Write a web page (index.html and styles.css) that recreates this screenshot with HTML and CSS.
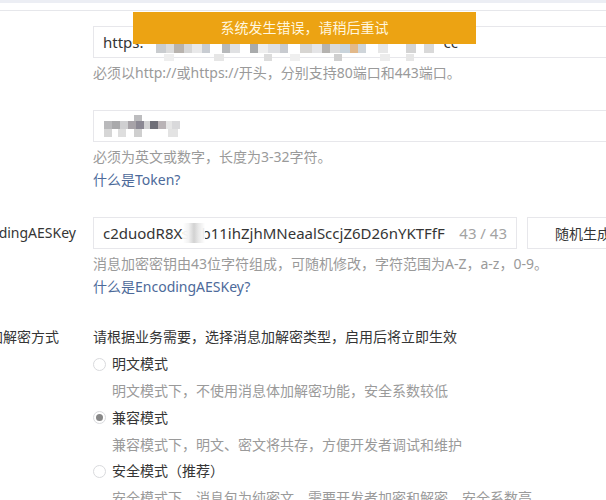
FILE: index.html
```html
<!DOCTYPE html>
<html lang="zh-CN">
<head>
<meta charset="utf-8">
<title>服务器配置</title>
<link rel="stylesheet" href="styles.css">
</head>
<body>
<div class="topbar"></div>
<div class="divider"></div>

<div class="toast">系统发生错误，请稍后重试</div>

<form class="form">
  <div class="row">
    <label class="label">URL</label>
    <div class="control">
      <div class="input wide"><span class="val">https:</span><span class="mosaic m1"></span><span class="val">cc</span></div>
      <p class="hint">必须以http://或https://开头，分别支持80端口和443端口。</p>
    </div>
  </div>

  <div class="row">
    <label class="label">Token</label>
    <div class="control">
      <div class="input wide"><span class="mosaic m2"></span></div>
      <p class="hint">必须为英文或数字，长度为3-32字符。</p>
      <a class="link" href="#">什么是Token?</a>
    </div>
  </div>

  <div class="row">
    <label class="label key-label">EncodingAESKey</label>
    <div class="control">
      <div class="key-line">
        <div class="input key">
          <span class="val">c2duodR8Xs<span class="blob"></span>b11ihZjhMNeaalSccjZ6D26nYKTFfF</span>
          <span class="count">43 / 43</span>
        </div>
        <button type="button" class="btn">随机生成</button>
      </div>
      <p class="hint">消息加密密钥由43位字符组成，可随机修改，字符范围为A-Z，a-z，0-9。</p>
      <a class="link" href="#">什么是EncodingAESKey?</a>
    </div>
  </div>

  <div class="row mode-row">
    <label class="label plain">消息加解密方式</label>
    <div class="control">
      <p class="intro">请根据业务需要，选择消息加解密类型，启用后将立即生效</p>
      <div class="option"><span class="radio"></span>明文模式</div>
      <p class="desc">明文模式下，不使用消息体加解密功能，安全系数较低</p>
      <div class="option"><span class="radio checked"></span>兼容模式</div>
      <p class="desc">兼容模式下，明文、密文将共存，方便开发者调试和维护</p>
      <div class="option"><span class="radio"></span>安全模式（推荐）</div>
      <p class="desc">安全模式下，消息包为纯密文，需要开发者加密和解密，安全系数高</p>
    </div>
  </div>
</form>
</body>
</html>
```

FILE: styles.css
```css
html, body {
  margin: 0;
  padding: 0;
  background: #ffffff;
  overflow: hidden;
}

body {
  font-family: "Noto Sans", "Noto Sans CJK SC", sans-serif;
  font-size: 14px;
  color: #353535;
  width: 606px;
  height: 500px;
  position: relative;
}

.topbar {
  height: 3px;
  background: #eceef4;
}

.divider {
  margin-top: 7px;
  border-top: 1px solid #e6e7eb;
}

.toast {
  position: absolute;
  top: 12px;
  left: 133px;
  width: 343px;
  height: 32px;
  line-height: 32px;
  text-align: center;
  background: #eca313;
  color: #fff6df;
  font-size: 14px;
  z-index: 5;
}

.form {
  margin-left: -39px;
  width: 900px;
  padding-top: 15px;
}

.row {
  display: grid;
  grid-template-columns: 132px 1fr;
  margin-bottom: 26px;
}

.label {
  line-height: 32px;
  white-space: nowrap;
  overflow: hidden;
  font-size: 14px;
}

.label.key-label {
  padding-left: 6px;
}

.label.plain {
  line-height: 26px;
}

.control {
  display: flex;
  flex-direction: column;
  align-items: flex-start;
}

.input {
  box-sizing: border-box;
  height: 32px;
  border: 1px solid #e7e7eb;
  padding: 0 9px;
  display: flex;
  align-items: center;
  font-size: 15px;
  white-space: nowrap;
  background: #fff;
}

.input.wide {
  width: 560px;
}

.val {
  color: #353535;
  display: inline-flex;
  align-items: center;
}

.mosaic {
  display: inline-block;
}

.mosaic.m1 {
  width: 298px;
  height: 17px;
  margin: 0 2px 0 0;
  position: relative;
  top: 10px;
  background:
    linear-gradient(90deg,
      transparent 0 12px, #c9cccf 12px 22px, #dcdcdc 22px 30px, #b8b3ae 30px 40px, #d6d6d6 40px 48px,
      #e9e9ea 48px 58px, #c8ccd2 58px 66px, transparent 66px 78px, #b7b9bb 78px 86px, #e0e1e3 86px 96px,
      transparent 96px 106px, #a9abac 106px 114px, #eeeeee 114px 124px, #dedfe2 124px 136px,
      #c8cbd0 136px 144px, transparent 144px 156px, #d7d5d2 156px 168px, #e5e5e7 168px 178px,
      #b5b3b0 178px 186px, #dadada 186px 196px, #c9d4dc 196px 206px, #e2b98a 206px 214px,
      #cfd5da 214px 222px, transparent 222px 234px, #e7e7e7 234px 244px, transparent 244px 262px,
      #d4d4d4 262px 272px, transparent 272px 280px, #d9d9d9 280px 290px, transparent 290px)
      top / 100% 9px no-repeat,
    linear-gradient(90deg,
      transparent 0 20px, #eeeeee 20px 30px, transparent 30px 70px, #e6e6e6 70px 80px,
      transparent 80px 120px, #dcdcdc 120px 128px, transparent 128px 146px, #efefef 146px 156px,
      transparent 156px 190px, #cfcfcf 190px 198px, transparent 198px 236px, #ececec 236px 246px,
      transparent 246px 262px, #e6e6e6 262px 270px, transparent 270px)
      bottom / 100% 7px no-repeat;
}

.mosaic.m2 {
  width: 76px;
  height: 22px;
  margin-left: 1px;
  background:
    linear-gradient(90deg,
      #b9b9bb 0 8px, #a9a9ab 8px 16px, #cfcfd1 16px 24px, #a7a3a8 24px 32px, #8b8893 32px 40px,
      #d3d3d4 40px 46px, #6f6f78 46px 54px, #b9b3b6 54px 62px, #e6e6e6 62px 68px, #d9d9db 68px 76px)
      0 6px / 100% 8px no-repeat,
    linear-gradient(90deg,
      #d6d6d6 0 8px, transparent 8px 14px, #dedede 14px 22px, transparent 22px 30px,
      #cfcfcf 30px 38px, transparent 38px 64px, #e3e3e3 64px 74px, transparent 74px)
      0 14px / 100% 8px no-repeat,
    linear-gradient(90deg, transparent 0 30px, #bdbdbf 30px 38px, transparent 38px)
      0 0 / 100% 6px no-repeat;
}

.key-line {
  display: flex;
  gap: 10px;
}

.input.key {
  width: 424px;
  justify-content: space-between;
}

.blob {
  display: inline-block;
  width: 22px;
  height: 20px;
  margin: 0 -4px 0 -6px;
  background:
    linear-gradient(90deg, rgba(255,255,255,0.9) 0, #f2f2f2 25%, #d2d2d2 50%, #e8e8e8 70%, rgba(255,255,255,0.9) 100%);
  position: relative;
}

.count {
  color: #a3a3a3;
}

.btn {
  box-sizing: border-box;
  width: 130px;
  height: 32px;
  border: 1px solid #e7e7eb;
  background: #fff;
  font-family: inherit;
  font-size: 14px;
  color: #353535;
  padding: 0 0 0 27px;
  text-align: left;
}

.hint {
  margin: 4px 0 0;
  line-height: 22px;
  color: #9a9a9a;
  white-space: nowrap;
}

.link {
  line-height: 22px;
  color: #4d6a9a;
  text-decoration: none;
  white-space: nowrap;
  margin-top: 1px;
}

.mode-row {
  margin-top: 4px;
}

.intro {
  margin: 0;
  line-height: 26px;
  white-space: nowrap;
}

.option {
  display: flex;
  align-items: center;
  gap: 6px;
  line-height: 28px;
  white-space: nowrap;
}

.radio {
  box-sizing: border-box;
  width: 13px;
  height: 13px;
  border: 1px solid #d9dadd;
  border-radius: 50%;
  background: #fff;
  display: inline-flex;
  align-items: center;
  justify-content: center;
}

.radio.checked::after {
  content: "";
  width: 7px;
  height: 7px;
  border-radius: 50%;
  background: #888888;
}

.desc {
  margin: 0 0 0 19px;
  line-height: 25.5px;
  color: #9a9a9a;
  white-space: nowrap;
}
```
